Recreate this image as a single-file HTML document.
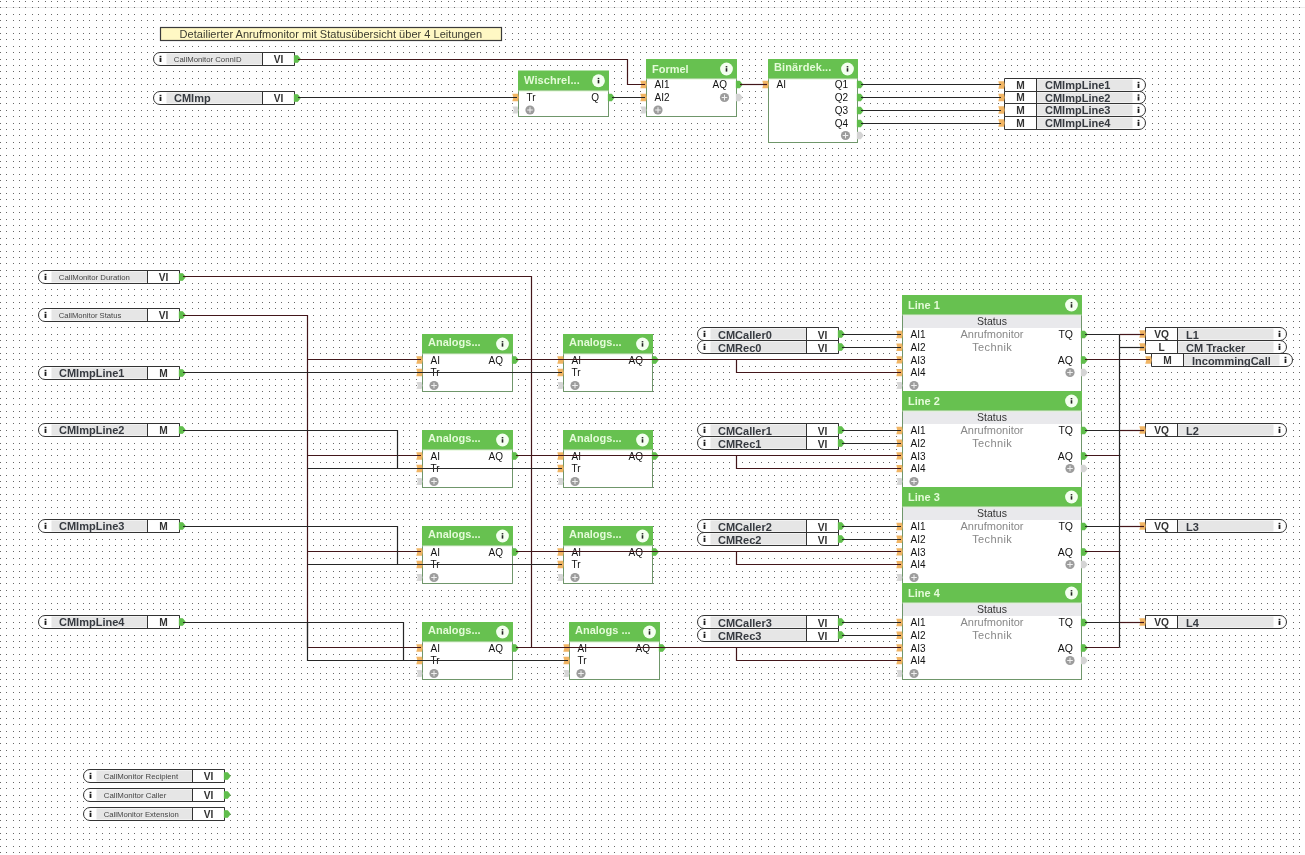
<!DOCTYPE html>
<html><head><meta charset="utf-8"><title>Loxone</title>
<style>
html,body{margin:0;padding:0;background:#fff;overflow:hidden;}
svg{display:block;font-family:"Liberation Sans", sans-serif;will-change:transform;}
</style></head><body>
<svg width="1305" height="855" viewBox="0 0 1305 855">
<defs><pattern id="dots" width="32" height="32" patternUnits="userSpaceOnUse"><g fill="#686868"><rect x="0" y="1" width="1" height="1"/><rect x="0" y="7" width="1" height="1"/><rect x="0" y="14" width="1" height="1"/><rect x="0" y="20" width="1" height="1"/><rect x="0" y="27" width="1" height="1"/><rect x="6" y="1" width="1" height="1"/><rect x="6" y="7" width="1" height="1"/><rect x="6" y="14" width="1" height="1"/><rect x="6" y="20" width="1" height="1"/><rect x="6" y="27" width="1" height="1"/><rect x="13" y="1" width="1" height="1"/><rect x="13" y="7" width="1" height="1"/><rect x="13" y="14" width="1" height="1"/><rect x="13" y="20" width="1" height="1"/><rect x="13" y="27" width="1" height="1"/><rect x="19" y="1" width="1" height="1"/><rect x="19" y="7" width="1" height="1"/><rect x="19" y="14" width="1" height="1"/><rect x="19" y="20" width="1" height="1"/><rect x="19" y="27" width="1" height="1"/><rect x="25" y="1" width="1" height="1"/><rect x="25" y="7" width="1" height="1"/><rect x="25" y="14" width="1" height="1"/><rect x="25" y="20" width="1" height="1"/><rect x="25" y="27" width="1" height="1"/></g></pattern></defs>
<rect x="0" y="0" width="1305" height="855" fill="#fff"/>
<rect x="0" y="7" width="1305" height="1" fill="#ececec"/>
<rect x="0" y="0" width="1305" height="855" fill="url(#dots)"/>
<rect x="160.5" y="27.5" width="341" height="13" fill="#fff8c4" stroke="#3a3a3a" stroke-width="1.2"/>
<text x="179.6" y="37.6" font-size="11" font-weight="normal" fill="#3a3a30" text-anchor="start" textLength="302.5">Detailierter Anrufmonitor mit Statusübersicht über 4 Leitungen</text>
<path d="M160.0,52.5 H294.5 V65.5 H160.0 A6.5,6.5 0 0 1 160.0,52.5 Z" fill="#fff" stroke="#333" stroke-width="1"/>
<rect x="166.5" y="53.5" width="96.0" height="11.0" fill="#e6e6e6"/>
<line x1="262.5" y1="52.5" x2="262.5" y2="65.5" stroke="#333" stroke-width="1"/>
<rect x="159.6" y="55.8" width="1.8" height="1.5" fill="#1e1e1e"/>
<rect x="159.6" y="58.0" width="1.8" height="4" fill="#1e1e1e"/>
<text x="173.8" y="61.9" font-size="8" font-weight="normal" fill="#454545" text-anchor="start" textLength="67.8" lengthAdjust="spacingAndGlyphs">CallMonitor ConnID</text>
<text x="278.5" y="62.7" font-size="10.2" font-weight="bold" fill="#333" text-anchor="middle" >VI</text>
<path d="M294.5,55.8 L297.5,55.8 L299.9,59.0 L297.5,62.2 L294.5,62.2 Z" fill="#60bd4c" stroke="#60bd4c" stroke-width="1.3" stroke-linejoin="round"/>
<path d="M160.0,91.5 H294.5 V104.5 H160.0 A6.5,6.5 0 0 1 160.0,91.5 Z" fill="#fff" stroke="#333" stroke-width="1"/>
<rect x="166.5" y="92.5" width="96.0" height="11.0" fill="#e6e6e6"/>
<line x1="262.5" y1="91.5" x2="262.5" y2="104.5" stroke="#333" stroke-width="1"/>
<rect x="159.6" y="94.8" width="1.8" height="1.5" fill="#1e1e1e"/>
<rect x="159.6" y="97.0" width="1.8" height="4" fill="#1e1e1e"/>
<text x="174.0" y="101.9" font-size="11" font-weight="bold" fill="#363a40" text-anchor="start" >CMImp</text>
<text x="278.5" y="101.60000000000001" font-size="10.2" font-weight="bold" fill="#333" text-anchor="middle" >VI</text>
<path d="M294.5,94.8 L297.5,94.8 L299.9,98.0 L297.5,101.2 L294.5,101.2 Z" fill="#60bd4c" stroke="#60bd4c" stroke-width="1.3" stroke-linejoin="round"/>
<rect x="518.5" y="90.5" width="90.0" height="26.0" fill="#fff" stroke="#6f966a" stroke-width="1"/>
<rect x="518.0" y="70.5" width="91.0" height="20.0" fill="#67c150"/>
<line x1="518.5" y1="91.0" x2="608.5" y2="91.0" stroke="#d9f5cc" stroke-width="1"/>
<text x="524.0" y="83.6" font-size="11" font-weight="bold" fill="#e4fbd8" text-anchor="start" textLength="55.8">Wischrel...</text>
<circle cx="598.5" cy="80.75" r="6.4" fill="#f4fff0"/>
<rect x="597.7" y="77.85" width="1.6" height="1.3" fill="#222"/>
<rect x="597.7" y="79.95" width="1.6" height="3.4" fill="#222"/>
<path d="M512.3,93.8 L518.0,93.8 L518.8,97.5 L518.0,101.2 L512.3,101.2 L513.3,97.5 Z" fill="#f1b564"/>
<text x="526.5" y="101.3" font-size="10" font-weight="normal" fill="#111" text-anchor="start" >Tr</text>
<path d="M608.5,94.3 L611.5,94.3 L613.9,97.5 L611.5,100.7 L608.5,100.7 Z" fill="#60bd4c" stroke="#60bd4c" stroke-width="1.3" stroke-linejoin="round"/>
<text x="599.0" y="101.3" font-size="10" font-weight="normal" fill="#111" text-anchor="end" >Q</text>
<path d="M512.3,106.4 L517.5,106.4 L518.5,110 L517.5,113.6 L512.3,113.6 L513.9,110 Z" fill="#d6d6d6"/>
<circle cx="530.0" cy="110" r="4.6" fill="#9c9c9c"/>
<path d="M527.2,110 h5.6 M530.0,107.2 v5.6" stroke="#f0f0f0" stroke-width="1"/>
<rect x="646.5" y="78.5" width="90.0" height="38.0" fill="#fff" stroke="#6f966a" stroke-width="1"/>
<rect x="646.0" y="59.0" width="91.0" height="19.5" fill="#67c150"/>
<line x1="646.5" y1="79.0" x2="736.5" y2="79.0" stroke="#d9f5cc" stroke-width="1"/>
<text x="652.0" y="73.0" font-size="11" font-weight="bold" fill="#e4fbd8" text-anchor="start" >Formel</text>
<circle cx="726.5" cy="69.0" r="6.4" fill="#f4fff0"/>
<rect x="725.7" y="66.1" width="1.6" height="1.3" fill="#222"/>
<rect x="725.7" y="68.2" width="1.6" height="3.4" fill="#222"/>
<path d="M640.3,80.8 L646.0,80.8 L646.8,84.5 L646.0,88.2 L640.3,88.2 L641.3,84.5 Z" fill="#f1b564"/>
<text x="654.5" y="88.3" font-size="10" font-weight="normal" fill="#111" text-anchor="start" >AI1</text>
<path d="M640.3,93.8 L646.0,93.8 L646.8,97.5 L646.0,101.2 L640.3,101.2 L641.3,97.5 Z" fill="#f1b564"/>
<text x="654.5" y="101.3" font-size="10" font-weight="normal" fill="#111" text-anchor="start" >AI2</text>
<path d="M736.5,81.3 L739.5,81.3 L741.9,84.5 L739.5,87.7 L736.5,87.7 Z" fill="#60bd4c" stroke="#60bd4c" stroke-width="1.3" stroke-linejoin="round"/>
<text x="727.0" y="88.3" font-size="10" font-weight="normal" fill="#111" text-anchor="end" >AQ</text>
<path d="M640.3,106.4 L645.5,106.4 L646.5,110 L645.5,113.6 L640.3,113.6 L641.9,110 Z" fill="#d6d6d6"/>
<circle cx="658.0" cy="110" r="4.6" fill="#9c9c9c"/>
<path d="M655.2,110 h5.6 M658.0,107.2 v5.6" stroke="#f0f0f0" stroke-width="1"/>
<path d="M736.5,94.3 L739.5,94.3 L741.9,97.5 L739.5,100.7 L736.5,100.7 Z" fill="#d4d4d4" stroke="#d4d4d4" stroke-width="1.3" stroke-linejoin="round"/>
<circle cx="724.5" cy="97.5" r="4.6" fill="#9c9c9c"/>
<path d="M721.7,97.5 h5.6 M724.5,94.7 v5.6" stroke="#f0f0f0" stroke-width="1"/>
<rect x="768.5" y="78.5" width="89.0" height="64.0" fill="#fff" stroke="#6f966a" stroke-width="1"/>
<rect x="768.0" y="59.0" width="90.0" height="19.5" fill="#67c150"/>
<line x1="768.5" y1="79.0" x2="857.5" y2="79.0" stroke="#d9f5cc" stroke-width="1"/>
<text x="774.0" y="71.2" font-size="11" font-weight="bold" fill="#e4fbd8" text-anchor="start" textLength="57.3">Binärdek...</text>
<circle cx="847.5" cy="69.0" r="6.4" fill="#f4fff0"/>
<rect x="846.7" y="66.1" width="1.6" height="1.3" fill="#222"/>
<rect x="846.7" y="68.2" width="1.6" height="3.4" fill="#222"/>
<path d="M762.3,80.8 L768.0,80.8 L768.8,84.5 L768.0,88.2 L762.3,88.2 L763.3,84.5 Z" fill="#f1b564"/>
<text x="776.5" y="88.3" font-size="10" font-weight="normal" fill="#111" text-anchor="start" >AI</text>
<path d="M857.5,81.3 L860.5,81.3 L862.9,84.5 L860.5,87.7 L857.5,87.7 Z" fill="#60bd4c" stroke="#60bd4c" stroke-width="1.3" stroke-linejoin="round"/>
<text x="848.0" y="88.3" font-size="10" font-weight="normal" fill="#111" text-anchor="end" >Q1</text>
<path d="M857.5,94.3 L860.5,94.3 L862.9,97.5 L860.5,100.7 L857.5,100.7 Z" fill="#60bd4c" stroke="#60bd4c" stroke-width="1.3" stroke-linejoin="round"/>
<text x="848.0" y="101.3" font-size="10" font-weight="normal" fill="#111" text-anchor="end" >Q2</text>
<path d="M857.5,107.3 L860.5,107.3 L862.9,110.5 L860.5,113.7 L857.5,113.7 Z" fill="#60bd4c" stroke="#60bd4c" stroke-width="1.3" stroke-linejoin="round"/>
<text x="848.0" y="114.3" font-size="10" font-weight="normal" fill="#111" text-anchor="end" >Q3</text>
<path d="M857.5,120.3 L860.5,120.3 L862.9,123.5 L860.5,126.7 L857.5,126.7 Z" fill="#60bd4c" stroke="#60bd4c" stroke-width="1.3" stroke-linejoin="round"/>
<text x="848.0" y="127.3" font-size="10" font-weight="normal" fill="#111" text-anchor="end" >Q4</text>
<path d="M857.5,132.3 L860.5,132.3 L862.9,135.5 L860.5,138.7 L857.5,138.7 Z" fill="#d4d4d4" stroke="#d4d4d4" stroke-width="1.3" stroke-linejoin="round"/>
<circle cx="845.5" cy="135.5" r="4.6" fill="#9c9c9c"/>
<path d="M842.7,135.5 h5.6 M845.5,132.7 v5.6" stroke="#f0f0f0" stroke-width="1"/>
<path d="M1004.5,78.5 H1139.0 A6.5,6.5 0 0 1 1139.0,91.5 H1004.5 Z" fill="#fff" stroke="#333" stroke-width="1"/>
<rect x="1036.5" y="79.5" width="96.0" height="11.0" fill="#e6e6e6"/>
<line x1="1036.5" y1="78.5" x2="1036.5" y2="91.5" stroke="#333" stroke-width="1"/>
<rect x="1137.6" y="81.8" width="1.8" height="1.5" fill="#1e1e1e"/>
<rect x="1137.6" y="84.0" width="1.8" height="4" fill="#1e1e1e"/>
<text x="1020.5" y="88.9" font-size="10.2" font-weight="bold" fill="#333" text-anchor="middle" >M</text>
<text x="1045.0" y="89.2" font-size="11" font-weight="bold" fill="#363a40" text-anchor="start" >CMImpLine1</text>
<path d="M998.3,81.3 L1004.0,81.3 L1004.8,85.0 L1004.0,88.7 L998.3,88.7 L999.3,85.0 Z" fill="#f1b564"/>
<path d="M1004.5,91.5 H1139.5 A6.0,6.0 0 0 1 1139.5,103.5 H1004.5 Z" fill="#fff" stroke="#333" stroke-width="1"/>
<rect x="1036.5" y="92.5" width="96.0" height="10.0" fill="#e6e6e6"/>
<line x1="1036.5" y1="91.5" x2="1036.5" y2="103.5" stroke="#333" stroke-width="1"/>
<rect x="1137.6" y="94.3" width="1.8" height="1.5" fill="#1e1e1e"/>
<rect x="1137.6" y="96.5" width="1.8" height="4" fill="#1e1e1e"/>
<text x="1020.5" y="101.4" font-size="10.2" font-weight="bold" fill="#333" text-anchor="middle" >M</text>
<text x="1045.0" y="101.7" font-size="11" font-weight="bold" fill="#363a40" text-anchor="start" >CMImpLine2</text>
<path d="M998.3,93.8 L1004.0,93.8 L1004.8,97.5 L1004.0,101.2 L998.3,101.2 L999.3,97.5 Z" fill="#f1b564"/>
<path d="M1004.5,103.5 H1139.0 A6.5,6.5 0 0 1 1139.0,116.5 H1004.5 Z" fill="#fff" stroke="#333" stroke-width="1"/>
<rect x="1036.5" y="104.5" width="96.0" height="11.0" fill="#e6e6e6"/>
<line x1="1036.5" y1="103.5" x2="1036.5" y2="116.5" stroke="#333" stroke-width="1"/>
<rect x="1137.6" y="106.8" width="1.8" height="1.5" fill="#1e1e1e"/>
<rect x="1137.6" y="109.0" width="1.8" height="4" fill="#1e1e1e"/>
<text x="1020.5" y="113.9" font-size="10.2" font-weight="bold" fill="#333" text-anchor="middle" >M</text>
<text x="1045.0" y="114.2" font-size="11" font-weight="bold" fill="#363a40" text-anchor="start" >CMImpLine3</text>
<path d="M998.3,106.3 L1004.0,106.3 L1004.8,110.0 L1004.0,113.7 L998.3,113.7 L999.3,110.0 Z" fill="#f1b564"/>
<path d="M1004.5,116.5 H1139.0 A6.5,6.5 0 0 1 1139.0,129.5 H1004.5 Z" fill="#fff" stroke="#333" stroke-width="1"/>
<rect x="1036.5" y="117.5" width="96.0" height="11.0" fill="#e6e6e6"/>
<line x1="1036.5" y1="116.5" x2="1036.5" y2="129.5" stroke="#333" stroke-width="1"/>
<rect x="1137.6" y="119.8" width="1.8" height="1.5" fill="#1e1e1e"/>
<rect x="1137.6" y="122.0" width="1.8" height="4" fill="#1e1e1e"/>
<text x="1020.5" y="126.9" font-size="10.2" font-weight="bold" fill="#333" text-anchor="middle" >M</text>
<text x="1045.0" y="127.2" font-size="11" font-weight="bold" fill="#363a40" text-anchor="start" >CMImpLine4</text>
<path d="M998.3,119.3 L1004.0,119.3 L1004.8,123.0 L1004.0,126.7 L998.3,126.7 L999.3,123.0 Z" fill="#f1b564"/>
<path d="M45.0,270.5 H179.5 V283.5 H45.0 A6.5,6.5 0 0 1 45.0,270.5 Z" fill="#fff" stroke="#333" stroke-width="1"/>
<rect x="51.5" y="271.5" width="96.0" height="11.0" fill="#e6e6e6"/>
<line x1="147.5" y1="270.5" x2="147.5" y2="283.5" stroke="#333" stroke-width="1"/>
<rect x="44.6" y="273.8" width="1.8" height="1.5" fill="#1e1e1e"/>
<rect x="44.6" y="276.0" width="1.8" height="4" fill="#1e1e1e"/>
<text x="58.8" y="279.9" font-size="8" font-weight="normal" fill="#454545" text-anchor="start" textLength="71" lengthAdjust="spacingAndGlyphs">CallMonitor Duration</text>
<text x="163.5" y="280.8" font-size="10.2" font-weight="bold" fill="#333" text-anchor="middle" >VI</text>
<path d="M179.5,273.8 L182.5,273.8 L184.9,277.0 L182.5,280.2 L179.5,280.2 Z" fill="#60bd4c" stroke="#60bd4c" stroke-width="1.3" stroke-linejoin="round"/>
<path d="M45.0,308.5 H179.5 V321.5 H45.0 A6.5,6.5 0 0 1 45.0,308.5 Z" fill="#fff" stroke="#333" stroke-width="1"/>
<rect x="51.5" y="309.5" width="96.0" height="11.0" fill="#e6e6e6"/>
<line x1="147.5" y1="308.5" x2="147.5" y2="321.5" stroke="#333" stroke-width="1"/>
<rect x="44.6" y="311.8" width="1.8" height="1.5" fill="#1e1e1e"/>
<rect x="44.6" y="314.0" width="1.8" height="4" fill="#1e1e1e"/>
<text x="58.8" y="317.9" font-size="8" font-weight="normal" fill="#454545" text-anchor="start" textLength="62.5" lengthAdjust="spacingAndGlyphs">CallMonitor Status</text>
<text x="163.5" y="318.8" font-size="10.2" font-weight="bold" fill="#333" text-anchor="middle" >VI</text>
<path d="M179.5,311.8 L182.5,311.8 L184.9,315.0 L182.5,318.2 L179.5,318.2 Z" fill="#60bd4c" stroke="#60bd4c" stroke-width="1.3" stroke-linejoin="round"/>
<path d="M45.0,366.5 H179.5 V379.5 H45.0 A6.5,6.5 0 0 1 45.0,366.5 Z" fill="#fff" stroke="#333" stroke-width="1"/>
<rect x="51.5" y="367.5" width="96.0" height="11.0" fill="#e6e6e6"/>
<line x1="147.5" y1="366.5" x2="147.5" y2="379.5" stroke="#333" stroke-width="1"/>
<rect x="44.6" y="369.8" width="1.8" height="1.5" fill="#1e1e1e"/>
<rect x="44.6" y="372.0" width="1.8" height="4" fill="#1e1e1e"/>
<text x="59.0" y="377.1" font-size="11" font-weight="bold" fill="#363a40" text-anchor="start" >CMImpLine1</text>
<text x="163.5" y="376.8" font-size="10.2" font-weight="bold" fill="#333" text-anchor="middle" >M</text>
<path d="M179.5,369.8 L182.5,369.8 L184.9,373.0 L182.5,376.2 L179.5,376.2 Z" fill="#60bd4c" stroke="#60bd4c" stroke-width="1.3" stroke-linejoin="round"/>
<path d="M45.0,423.5 H179.5 V436.5 H45.0 A6.5,6.5 0 0 1 45.0,423.5 Z" fill="#fff" stroke="#333" stroke-width="1"/>
<rect x="51.5" y="424.5" width="96.0" height="11.0" fill="#e6e6e6"/>
<line x1="147.5" y1="423.5" x2="147.5" y2="436.5" stroke="#333" stroke-width="1"/>
<rect x="44.6" y="426.8" width="1.8" height="1.5" fill="#1e1e1e"/>
<rect x="44.6" y="429.0" width="1.8" height="4" fill="#1e1e1e"/>
<text x="59.0" y="434.1" font-size="11" font-weight="bold" fill="#363a40" text-anchor="start" >CMImpLine2</text>
<text x="163.5" y="433.8" font-size="10.2" font-weight="bold" fill="#333" text-anchor="middle" >M</text>
<path d="M179.5,426.8 L182.5,426.8 L184.9,430.0 L182.5,433.2 L179.5,433.2 Z" fill="#60bd4c" stroke="#60bd4c" stroke-width="1.3" stroke-linejoin="round"/>
<path d="M45.0,519.5 H179.5 V532.5 H45.0 A6.5,6.5 0 0 1 45.0,519.5 Z" fill="#fff" stroke="#333" stroke-width="1"/>
<rect x="51.5" y="520.5" width="96.0" height="11.0" fill="#e6e6e6"/>
<line x1="147.5" y1="519.5" x2="147.5" y2="532.5" stroke="#333" stroke-width="1"/>
<rect x="44.6" y="522.8" width="1.8" height="1.5" fill="#1e1e1e"/>
<rect x="44.6" y="525.0" width="1.8" height="4" fill="#1e1e1e"/>
<text x="59.0" y="530.1" font-size="11" font-weight="bold" fill="#363a40" text-anchor="start" >CMImpLine3</text>
<text x="163.5" y="529.8000000000001" font-size="10.2" font-weight="bold" fill="#333" text-anchor="middle" >M</text>
<path d="M179.5,522.8 L182.5,522.8 L184.9,526.0 L182.5,529.2 L179.5,529.2 Z" fill="#60bd4c" stroke="#60bd4c" stroke-width="1.3" stroke-linejoin="round"/>
<path d="M45.0,615.5 H179.5 V628.5 H45.0 A6.5,6.5 0 0 1 45.0,615.5 Z" fill="#fff" stroke="#333" stroke-width="1"/>
<rect x="51.5" y="616.5" width="96.0" height="11.0" fill="#e6e6e6"/>
<line x1="147.5" y1="615.5" x2="147.5" y2="628.5" stroke="#333" stroke-width="1"/>
<rect x="44.6" y="618.8" width="1.8" height="1.5" fill="#1e1e1e"/>
<rect x="44.6" y="621.0" width="1.8" height="4" fill="#1e1e1e"/>
<text x="59.0" y="626.1" font-size="11" font-weight="bold" fill="#363a40" text-anchor="start" >CMImpLine4</text>
<text x="163.5" y="625.8000000000001" font-size="10.2" font-weight="bold" fill="#333" text-anchor="middle" >M</text>
<path d="M179.5,618.8 L182.5,618.8 L184.9,622.0 L182.5,625.2 L179.5,625.2 Z" fill="#60bd4c" stroke="#60bd4c" stroke-width="1.3" stroke-linejoin="round"/>
<rect x="422.5" y="353.5" width="90.0" height="38.0" fill="#fff" stroke="#6f966a" stroke-width="1"/>
<rect x="422.0" y="334.0" width="91.0" height="19.5" fill="#67c150"/>
<line x1="422.5" y1="354.0" x2="512.5" y2="354.0" stroke="#d9f5cc" stroke-width="1"/>
<text x="428.0" y="346.2" font-size="11" font-weight="bold" fill="#e4fbd8" text-anchor="start" >Analogs...</text>
<circle cx="502.5" cy="344.0" r="6.4" fill="#f4fff0"/>
<rect x="501.7" y="341.1" width="1.6" height="1.3" fill="#222"/>
<rect x="501.7" y="343.2" width="1.6" height="3.4" fill="#222"/>
<path d="M416.3,356.3 L422.0,356.3 L422.8,360.0 L422.0,363.7 L416.3,363.7 L417.3,360.0 Z" fill="#f1b564"/>
<text x="430.5" y="363.8" font-size="10" font-weight="normal" fill="#111" text-anchor="start" >AI</text>
<path d="M416.3,368.8 L422.0,368.8 L422.8,372.5 L422.0,376.2 L416.3,376.2 L417.3,372.5 Z" fill="#f1b564"/>
<text x="430.5" y="376.3" font-size="10" font-weight="normal" fill="#111" text-anchor="start" >Tr</text>
<path d="M512.5,356.8 L515.5,356.8 L517.9,360.0 L515.5,363.2 L512.5,363.2 Z" fill="#60bd4c" stroke="#60bd4c" stroke-width="1.3" stroke-linejoin="round"/>
<text x="503.0" y="363.8" font-size="10" font-weight="normal" fill="#111" text-anchor="end" >AQ</text>
<path d="M416.3,381.9 L421.5,381.9 L422.5,385.5 L421.5,389.1 L416.3,389.1 L417.9,385.5 Z" fill="#d6d6d6"/>
<circle cx="434.0" cy="385.5" r="4.6" fill="#9c9c9c"/>
<path d="M431.2,385.5 h5.6 M434.0,382.7 v5.6" stroke="#f0f0f0" stroke-width="1"/>
<rect x="563.5" y="353.5" width="89.0" height="38.0" fill="#fff" stroke="#6f966a" stroke-width="1"/>
<rect x="563.0" y="334.0" width="90.0" height="19.5" fill="#67c150"/>
<line x1="563.5" y1="354.0" x2="652.5" y2="354.0" stroke="#d9f5cc" stroke-width="1"/>
<text x="569.0" y="346.2" font-size="11" font-weight="bold" fill="#e4fbd8" text-anchor="start" >Analogs...</text>
<circle cx="642.5" cy="344.0" r="6.4" fill="#f4fff0"/>
<rect x="641.7" y="341.1" width="1.6" height="1.3" fill="#222"/>
<rect x="641.7" y="343.2" width="1.6" height="3.4" fill="#222"/>
<path d="M557.3,356.3 L563.0,356.3 L563.8,360.0 L563.0,363.7 L557.3,363.7 L558.3,360.0 Z" fill="#f1b564"/>
<text x="571.5" y="363.8" font-size="10" font-weight="normal" fill="#111" text-anchor="start" >AI</text>
<path d="M557.3,368.8 L563.0,368.8 L563.8,372.5 L563.0,376.2 L557.3,376.2 L558.3,372.5 Z" fill="#f1b564"/>
<text x="571.5" y="376.3" font-size="10" font-weight="normal" fill="#111" text-anchor="start" >Tr</text>
<path d="M652.5,356.8 L655.5,356.8 L657.9,360.0 L655.5,363.2 L652.5,363.2 Z" fill="#60bd4c" stroke="#60bd4c" stroke-width="1.3" stroke-linejoin="round"/>
<text x="643.0" y="363.8" font-size="10" font-weight="normal" fill="#111" text-anchor="end" >AQ</text>
<path d="M557.3,381.9 L562.5,381.9 L563.5,385.5 L562.5,389.1 L557.3,389.1 L558.9,385.5 Z" fill="#d6d6d6"/>
<circle cx="575.0" cy="385.5" r="4.6" fill="#9c9c9c"/>
<path d="M572.2,385.5 h5.6 M575.0,382.7 v5.6" stroke="#f0f0f0" stroke-width="1"/>
<rect x="422.5" y="449.5" width="90.0" height="38.0" fill="#fff" stroke="#6f966a" stroke-width="1"/>
<rect x="422.0" y="430.0" width="91.0" height="19.5" fill="#67c150"/>
<line x1="422.5" y1="450.0" x2="512.5" y2="450.0" stroke="#d9f5cc" stroke-width="1"/>
<text x="428.0" y="442.2" font-size="11" font-weight="bold" fill="#e4fbd8" text-anchor="start" >Analogs...</text>
<circle cx="502.5" cy="440.0" r="6.4" fill="#f4fff0"/>
<rect x="501.7" y="437.1" width="1.6" height="1.3" fill="#222"/>
<rect x="501.7" y="439.2" width="1.6" height="3.4" fill="#222"/>
<path d="M416.3,452.3 L422.0,452.3 L422.8,456.0 L422.0,459.7 L416.3,459.7 L417.3,456.0 Z" fill="#f1b564"/>
<text x="430.5" y="459.8" font-size="10" font-weight="normal" fill="#111" text-anchor="start" >AI</text>
<path d="M416.3,464.8 L422.0,464.8 L422.8,468.5 L422.0,472.2 L416.3,472.2 L417.3,468.5 Z" fill="#f1b564"/>
<text x="430.5" y="472.3" font-size="10" font-weight="normal" fill="#111" text-anchor="start" >Tr</text>
<path d="M512.5,452.8 L515.5,452.8 L517.9,456.0 L515.5,459.2 L512.5,459.2 Z" fill="#60bd4c" stroke="#60bd4c" stroke-width="1.3" stroke-linejoin="round"/>
<text x="503.0" y="459.8" font-size="10" font-weight="normal" fill="#111" text-anchor="end" >AQ</text>
<path d="M416.3,477.9 L421.5,477.9 L422.5,481.5 L421.5,485.1 L416.3,485.1 L417.9,481.5 Z" fill="#d6d6d6"/>
<circle cx="434.0" cy="481.5" r="4.6" fill="#9c9c9c"/>
<path d="M431.2,481.5 h5.6 M434.0,478.7 v5.6" stroke="#f0f0f0" stroke-width="1"/>
<rect x="563.5" y="449.5" width="89.0" height="38.0" fill="#fff" stroke="#6f966a" stroke-width="1"/>
<rect x="563.0" y="430.0" width="90.0" height="19.5" fill="#67c150"/>
<line x1="563.5" y1="450.0" x2="652.5" y2="450.0" stroke="#d9f5cc" stroke-width="1"/>
<text x="569.0" y="442.2" font-size="11" font-weight="bold" fill="#e4fbd8" text-anchor="start" >Analogs...</text>
<circle cx="642.5" cy="440.0" r="6.4" fill="#f4fff0"/>
<rect x="641.7" y="437.1" width="1.6" height="1.3" fill="#222"/>
<rect x="641.7" y="439.2" width="1.6" height="3.4" fill="#222"/>
<path d="M557.3,452.3 L563.0,452.3 L563.8,456.0 L563.0,459.7 L557.3,459.7 L558.3,456.0 Z" fill="#f1b564"/>
<text x="571.5" y="459.8" font-size="10" font-weight="normal" fill="#111" text-anchor="start" >AI</text>
<path d="M557.3,464.8 L563.0,464.8 L563.8,468.5 L563.0,472.2 L557.3,472.2 L558.3,468.5 Z" fill="#f1b564"/>
<text x="571.5" y="472.3" font-size="10" font-weight="normal" fill="#111" text-anchor="start" >Tr</text>
<path d="M652.5,452.8 L655.5,452.8 L657.9,456.0 L655.5,459.2 L652.5,459.2 Z" fill="#60bd4c" stroke="#60bd4c" stroke-width="1.3" stroke-linejoin="round"/>
<text x="643.0" y="459.8" font-size="10" font-weight="normal" fill="#111" text-anchor="end" >AQ</text>
<path d="M557.3,477.9 L562.5,477.9 L563.5,481.5 L562.5,485.1 L557.3,485.1 L558.9,481.5 Z" fill="#d6d6d6"/>
<circle cx="575.0" cy="481.5" r="4.6" fill="#9c9c9c"/>
<path d="M572.2,481.5 h5.6 M575.0,478.7 v5.6" stroke="#f0f0f0" stroke-width="1"/>
<rect x="422.5" y="545.5" width="90.0" height="38.0" fill="#fff" stroke="#6f966a" stroke-width="1"/>
<rect x="422.0" y="526.0" width="91.0" height="19.5" fill="#67c150"/>
<line x1="422.5" y1="546.0" x2="512.5" y2="546.0" stroke="#d9f5cc" stroke-width="1"/>
<text x="428.0" y="538.2" font-size="11" font-weight="bold" fill="#e4fbd8" text-anchor="start" >Analogs...</text>
<circle cx="502.5" cy="536.0" r="6.4" fill="#f4fff0"/>
<rect x="501.7" y="533.1" width="1.6" height="1.3" fill="#222"/>
<rect x="501.7" y="535.2" width="1.6" height="3.4" fill="#222"/>
<path d="M416.3,548.3 L422.0,548.3 L422.8,552.0 L422.0,555.7 L416.3,555.7 L417.3,552.0 Z" fill="#f1b564"/>
<text x="430.5" y="555.8" font-size="10" font-weight="normal" fill="#111" text-anchor="start" >AI</text>
<path d="M416.3,560.8 L422.0,560.8 L422.8,564.5 L422.0,568.2 L416.3,568.2 L417.3,564.5 Z" fill="#f1b564"/>
<text x="430.5" y="568.3" font-size="10" font-weight="normal" fill="#111" text-anchor="start" >Tr</text>
<path d="M512.5,548.8 L515.5,548.8 L517.9,552.0 L515.5,555.2 L512.5,555.2 Z" fill="#60bd4c" stroke="#60bd4c" stroke-width="1.3" stroke-linejoin="round"/>
<text x="503.0" y="555.8" font-size="10" font-weight="normal" fill="#111" text-anchor="end" >AQ</text>
<path d="M416.3,573.9 L421.5,573.9 L422.5,577.5 L421.5,581.1 L416.3,581.1 L417.9,577.5 Z" fill="#d6d6d6"/>
<circle cx="434.0" cy="577.5" r="4.6" fill="#9c9c9c"/>
<path d="M431.2,577.5 h5.6 M434.0,574.7 v5.6" stroke="#f0f0f0" stroke-width="1"/>
<rect x="563.5" y="545.5" width="89.0" height="38.0" fill="#fff" stroke="#6f966a" stroke-width="1"/>
<rect x="563.0" y="526.0" width="90.0" height="19.5" fill="#67c150"/>
<line x1="563.5" y1="546.0" x2="652.5" y2="546.0" stroke="#d9f5cc" stroke-width="1"/>
<text x="569.0" y="538.2" font-size="11" font-weight="bold" fill="#e4fbd8" text-anchor="start" >Analogs...</text>
<circle cx="642.5" cy="536.0" r="6.4" fill="#f4fff0"/>
<rect x="641.7" y="533.1" width="1.6" height="1.3" fill="#222"/>
<rect x="641.7" y="535.2" width="1.6" height="3.4" fill="#222"/>
<path d="M557.3,548.3 L563.0,548.3 L563.8,552.0 L563.0,555.7 L557.3,555.7 L558.3,552.0 Z" fill="#f1b564"/>
<text x="571.5" y="555.8" font-size="10" font-weight="normal" fill="#111" text-anchor="start" >AI</text>
<path d="M557.3,560.8 L563.0,560.8 L563.8,564.5 L563.0,568.2 L557.3,568.2 L558.3,564.5 Z" fill="#f1b564"/>
<text x="571.5" y="568.3" font-size="10" font-weight="normal" fill="#111" text-anchor="start" >Tr</text>
<path d="M652.5,548.8 L655.5,548.8 L657.9,552.0 L655.5,555.2 L652.5,555.2 Z" fill="#60bd4c" stroke="#60bd4c" stroke-width="1.3" stroke-linejoin="round"/>
<text x="643.0" y="555.8" font-size="10" font-weight="normal" fill="#111" text-anchor="end" >AQ</text>
<path d="M557.3,573.9 L562.5,573.9 L563.5,577.5 L562.5,581.1 L557.3,581.1 L558.9,577.5 Z" fill="#d6d6d6"/>
<circle cx="575.0" cy="577.5" r="4.6" fill="#9c9c9c"/>
<path d="M572.2,577.5 h5.6 M575.0,574.7 v5.6" stroke="#f0f0f0" stroke-width="1"/>
<rect x="422.5" y="641.5" width="90.0" height="38.0" fill="#fff" stroke="#6f966a" stroke-width="1"/>
<rect x="422.0" y="622.0" width="91.0" height="19.5" fill="#67c150"/>
<line x1="422.5" y1="642.0" x2="512.5" y2="642.0" stroke="#d9f5cc" stroke-width="1"/>
<text x="428.0" y="634.2" font-size="11" font-weight="bold" fill="#e4fbd8" text-anchor="start" >Analogs...</text>
<circle cx="502.5" cy="632.0" r="6.4" fill="#f4fff0"/>
<rect x="501.7" y="629.1" width="1.6" height="1.3" fill="#222"/>
<rect x="501.7" y="631.2" width="1.6" height="3.4" fill="#222"/>
<path d="M416.3,644.3 L422.0,644.3 L422.8,648.0 L422.0,651.7 L416.3,651.7 L417.3,648.0 Z" fill="#f1b564"/>
<text x="430.5" y="651.8" font-size="10" font-weight="normal" fill="#111" text-anchor="start" >AI</text>
<path d="M416.3,656.8 L422.0,656.8 L422.8,660.5 L422.0,664.2 L416.3,664.2 L417.3,660.5 Z" fill="#f1b564"/>
<text x="430.5" y="664.3" font-size="10" font-weight="normal" fill="#111" text-anchor="start" >Tr</text>
<path d="M512.5,644.8 L515.5,644.8 L517.9,648.0 L515.5,651.2 L512.5,651.2 Z" fill="#60bd4c" stroke="#60bd4c" stroke-width="1.3" stroke-linejoin="round"/>
<text x="503.0" y="651.8" font-size="10" font-weight="normal" fill="#111" text-anchor="end" >AQ</text>
<path d="M416.3,669.9 L421.5,669.9 L422.5,673.5 L421.5,677.1 L416.3,677.1 L417.9,673.5 Z" fill="#d6d6d6"/>
<circle cx="434.0" cy="673.5" r="4.6" fill="#9c9c9c"/>
<path d="M431.2,673.5 h5.6 M434.0,670.7 v5.6" stroke="#f0f0f0" stroke-width="1"/>
<rect x="569.5" y="641.5" width="90.0" height="38.0" fill="#fff" stroke="#6f966a" stroke-width="1"/>
<rect x="569.0" y="622.0" width="91.0" height="19.5" fill="#67c150"/>
<line x1="569.5" y1="642.0" x2="659.5" y2="642.0" stroke="#d9f5cc" stroke-width="1"/>
<text x="575.0" y="634.2" font-size="11" font-weight="bold" fill="#e4fbd8" text-anchor="start" >Analogs ...</text>
<circle cx="649.5" cy="632.0" r="6.4" fill="#f4fff0"/>
<rect x="648.7" y="629.1" width="1.6" height="1.3" fill="#222"/>
<rect x="648.7" y="631.2" width="1.6" height="3.4" fill="#222"/>
<path d="M563.3,644.3 L569.0,644.3 L569.8,648.0 L569.0,651.7 L563.3,651.7 L564.3,648.0 Z" fill="#f1b564"/>
<text x="577.5" y="651.8" font-size="10" font-weight="normal" fill="#111" text-anchor="start" >AI</text>
<path d="M563.3,656.8 L569.0,656.8 L569.8,660.5 L569.0,664.2 L563.3,664.2 L564.3,660.5 Z" fill="#f1b564"/>
<text x="577.5" y="664.3" font-size="10" font-weight="normal" fill="#111" text-anchor="start" >Tr</text>
<path d="M659.5,644.8 L662.5,644.8 L664.9,648.0 L662.5,651.2 L659.5,651.2 Z" fill="#60bd4c" stroke="#60bd4c" stroke-width="1.3" stroke-linejoin="round"/>
<text x="650.0" y="651.8" font-size="10" font-weight="normal" fill="#111" text-anchor="end" >AQ</text>
<path d="M563.3,669.9 L568.5,669.9 L569.5,673.5 L568.5,677.1 L563.3,677.1 L564.9,673.5 Z" fill="#d6d6d6"/>
<circle cx="581.0" cy="673.5" r="4.6" fill="#9c9c9c"/>
<path d="M578.2,673.5 h5.6 M581.0,670.7 v5.6" stroke="#f0f0f0" stroke-width="1"/>
<path d="M704.0,327.5 H838.5 V340.5 H704.0 A6.5,6.5 0 0 1 704.0,327.5 Z" fill="#fff" stroke="#333" stroke-width="1"/>
<rect x="710.5" y="328.5" width="96.0" height="11.0" fill="#e6e6e6"/>
<line x1="806.5" y1="327.5" x2="806.5" y2="340.5" stroke="#333" stroke-width="1"/>
<rect x="703.6" y="330.8" width="1.8" height="1.5" fill="#1e1e1e"/>
<rect x="703.6" y="333.0" width="1.8" height="4" fill="#1e1e1e"/>
<text x="718.0" y="338.8" font-size="11" font-weight="bold" fill="#363a40" text-anchor="start" >CMCaller0</text>
<text x="822.5" y="338.5" font-size="10.2" font-weight="bold" fill="#333" text-anchor="middle" >VI</text>
<path d="M838.5,330.8 L841.5,330.8 L843.9,334.0 L841.5,337.2 L838.5,337.2 Z" fill="#60bd4c" stroke="#60bd4c" stroke-width="1.3" stroke-linejoin="round"/>
<path d="M704.0,340.5 H838.5 V353.5 H704.0 A6.5,6.5 0 0 1 704.0,340.5 Z" fill="#fff" stroke="#333" stroke-width="1"/>
<rect x="710.5" y="341.5" width="96.0" height="11.0" fill="#e6e6e6"/>
<line x1="806.5" y1="340.5" x2="806.5" y2="353.5" stroke="#333" stroke-width="1"/>
<rect x="703.6" y="343.8" width="1.8" height="1.5" fill="#1e1e1e"/>
<rect x="703.6" y="346.0" width="1.8" height="4" fill="#1e1e1e"/>
<text x="718.0" y="351.8" font-size="11" font-weight="bold" fill="#363a40" text-anchor="start" >CMRec0</text>
<text x="822.5" y="351.5" font-size="10.2" font-weight="bold" fill="#333" text-anchor="middle" >VI</text>
<path d="M838.5,343.8 L841.5,343.8 L843.9,347.0 L841.5,350.2 L838.5,350.2 Z" fill="#60bd4c" stroke="#60bd4c" stroke-width="1.3" stroke-linejoin="round"/>
<path d="M704.0,423.5 H838.5 V436.5 H704.0 A6.5,6.5 0 0 1 704.0,423.5 Z" fill="#fff" stroke="#333" stroke-width="1"/>
<rect x="710.5" y="424.5" width="96.0" height="11.0" fill="#e6e6e6"/>
<line x1="806.5" y1="423.5" x2="806.5" y2="436.5" stroke="#333" stroke-width="1"/>
<rect x="703.6" y="426.8" width="1.8" height="1.5" fill="#1e1e1e"/>
<rect x="703.6" y="429.0" width="1.8" height="4" fill="#1e1e1e"/>
<text x="718.0" y="434.8" font-size="11" font-weight="bold" fill="#363a40" text-anchor="start" >CMCaller1</text>
<text x="822.5" y="434.5" font-size="10.2" font-weight="bold" fill="#333" text-anchor="middle" >VI</text>
<path d="M838.5,426.8 L841.5,426.8 L843.9,430.0 L841.5,433.2 L838.5,433.2 Z" fill="#60bd4c" stroke="#60bd4c" stroke-width="1.3" stroke-linejoin="round"/>
<path d="M704.0,436.5 H838.5 V449.5 H704.0 A6.5,6.5 0 0 1 704.0,436.5 Z" fill="#fff" stroke="#333" stroke-width="1"/>
<rect x="710.5" y="437.5" width="96.0" height="11.0" fill="#e6e6e6"/>
<line x1="806.5" y1="436.5" x2="806.5" y2="449.5" stroke="#333" stroke-width="1"/>
<rect x="703.6" y="439.8" width="1.8" height="1.5" fill="#1e1e1e"/>
<rect x="703.6" y="442.0" width="1.8" height="4" fill="#1e1e1e"/>
<text x="718.0" y="447.8" font-size="11" font-weight="bold" fill="#363a40" text-anchor="start" >CMRec1</text>
<text x="822.5" y="447.5" font-size="10.2" font-weight="bold" fill="#333" text-anchor="middle" >VI</text>
<path d="M838.5,439.8 L841.5,439.8 L843.9,443.0 L841.5,446.2 L838.5,446.2 Z" fill="#60bd4c" stroke="#60bd4c" stroke-width="1.3" stroke-linejoin="round"/>
<path d="M704.0,519.5 H838.5 V532.5 H704.0 A6.5,6.5 0 0 1 704.0,519.5 Z" fill="#fff" stroke="#333" stroke-width="1"/>
<rect x="710.5" y="520.5" width="96.0" height="11.0" fill="#e6e6e6"/>
<line x1="806.5" y1="519.5" x2="806.5" y2="532.5" stroke="#333" stroke-width="1"/>
<rect x="703.6" y="522.8" width="1.8" height="1.5" fill="#1e1e1e"/>
<rect x="703.6" y="525.0" width="1.8" height="4" fill="#1e1e1e"/>
<text x="718.0" y="530.8" font-size="11" font-weight="bold" fill="#363a40" text-anchor="start" >CMCaller2</text>
<text x="822.5" y="530.5" font-size="10.2" font-weight="bold" fill="#333" text-anchor="middle" >VI</text>
<path d="M838.5,522.8 L841.5,522.8 L843.9,526.0 L841.5,529.2 L838.5,529.2 Z" fill="#60bd4c" stroke="#60bd4c" stroke-width="1.3" stroke-linejoin="round"/>
<path d="M704.0,532.5 H838.5 V545.5 H704.0 A6.5,6.5 0 0 1 704.0,532.5 Z" fill="#fff" stroke="#333" stroke-width="1"/>
<rect x="710.5" y="533.5" width="96.0" height="11.0" fill="#e6e6e6"/>
<line x1="806.5" y1="532.5" x2="806.5" y2="545.5" stroke="#333" stroke-width="1"/>
<rect x="703.6" y="535.8" width="1.8" height="1.5" fill="#1e1e1e"/>
<rect x="703.6" y="538.0" width="1.8" height="4" fill="#1e1e1e"/>
<text x="718.0" y="543.8" font-size="11" font-weight="bold" fill="#363a40" text-anchor="start" >CMRec2</text>
<text x="822.5" y="543.5" font-size="10.2" font-weight="bold" fill="#333" text-anchor="middle" >VI</text>
<path d="M838.5,535.8 L841.5,535.8 L843.9,539.0 L841.5,542.2 L838.5,542.2 Z" fill="#60bd4c" stroke="#60bd4c" stroke-width="1.3" stroke-linejoin="round"/>
<path d="M704.0,615.5 H838.5 V628.5 H704.0 A6.5,6.5 0 0 1 704.0,615.5 Z" fill="#fff" stroke="#333" stroke-width="1"/>
<rect x="710.5" y="616.5" width="96.0" height="11.0" fill="#e6e6e6"/>
<line x1="806.5" y1="615.5" x2="806.5" y2="628.5" stroke="#333" stroke-width="1"/>
<rect x="703.6" y="618.8" width="1.8" height="1.5" fill="#1e1e1e"/>
<rect x="703.6" y="621.0" width="1.8" height="4" fill="#1e1e1e"/>
<text x="718.0" y="626.8" font-size="11" font-weight="bold" fill="#363a40" text-anchor="start" >CMCaller3</text>
<text x="822.5" y="626.5" font-size="10.2" font-weight="bold" fill="#333" text-anchor="middle" >VI</text>
<path d="M838.5,618.8 L841.5,618.8 L843.9,622.0 L841.5,625.2 L838.5,625.2 Z" fill="#60bd4c" stroke="#60bd4c" stroke-width="1.3" stroke-linejoin="round"/>
<path d="M704.0,628.5 H838.5 V641.5 H704.0 A6.5,6.5 0 0 1 704.0,628.5 Z" fill="#fff" stroke="#333" stroke-width="1"/>
<rect x="710.5" y="629.5" width="96.0" height="11.0" fill="#e6e6e6"/>
<line x1="806.5" y1="628.5" x2="806.5" y2="641.5" stroke="#333" stroke-width="1"/>
<rect x="703.6" y="631.8" width="1.8" height="1.5" fill="#1e1e1e"/>
<rect x="703.6" y="634.0" width="1.8" height="4" fill="#1e1e1e"/>
<text x="718.0" y="639.8" font-size="11" font-weight="bold" fill="#363a40" text-anchor="start" >CMRec3</text>
<text x="822.5" y="639.5" font-size="10.2" font-weight="bold" fill="#333" text-anchor="middle" >VI</text>
<path d="M838.5,631.8 L841.5,631.8 L843.9,635.0 L841.5,638.2 L838.5,638.2 Z" fill="#60bd4c" stroke="#60bd4c" stroke-width="1.3" stroke-linejoin="round"/>
<rect x="902.5" y="314.5" width="179.0" height="77" fill="#fff" stroke="#6f966a" stroke-width="1"/>
<rect x="902.0" y="295.0" width="180.0" height="19.5" fill="#67c150"/>
<rect x="903.0" y="315.0" width="178.0" height="13" fill="#e9e9ec"/>
<line x1="902.5" y1="315.0" x2="1081.5" y2="315.0" stroke="#d9f5cc" stroke-width="1"/>
<text x="908.0" y="309.1" font-size="11" font-weight="bold" fill="#e4fbd8" text-anchor="start" >Line 1</text>
<circle cx="1071.5" cy="305.0" r="6.4" fill="#f4fff0"/>
<rect x="1070.7" y="302.1" width="1.6" height="1.3" fill="#222"/>
<rect x="1070.7" y="304.2" width="1.6" height="3.4" fill="#222"/>
<text x="992.0" y="324.9" font-size="10.5" font-weight="normal" fill="#333" text-anchor="middle" >Status</text>
<text x="992.0" y="338.1" font-size="11" font-weight="normal" fill="#888" text-anchor="middle" >Anrufmonitor</text>
<text x="992.0" y="350.8" font-size="11" font-weight="normal" fill="#888" text-anchor="middle" textLength="39.5">Technik</text>
<path d="M896.3,330.8 L902.0,330.8 L902.8,334.5 L902.0,338.2 L896.3,338.2 L897.3,334.5 Z" fill="#f1b564"/>
<text x="910.5" y="338.1" font-size="10" font-weight="normal" fill="#111" text-anchor="start" >AI1</text>
<path d="M896.3,343.5 L902.0,343.5 L902.8,347.2 L902.0,350.9 L896.3,350.9 L897.3,347.2 Z" fill="#f1b564"/>
<text x="910.5" y="350.8" font-size="10" font-weight="normal" fill="#111" text-anchor="start" >AI2</text>
<path d="M896.3,356.2 L902.0,356.2 L902.8,359.9 L902.0,363.59999999999997 L896.3,363.59999999999997 L897.3,359.9 Z" fill="#f1b564"/>
<text x="910.5" y="363.5" font-size="10" font-weight="normal" fill="#111" text-anchor="start" >AI3</text>
<path d="M896.3,368.90000000000003 L902.0,368.90000000000003 L902.8,372.6 L902.0,376.3 L896.3,376.3 L897.3,372.6 Z" fill="#f1b564"/>
<text x="910.5" y="376.20000000000005" font-size="10" font-weight="normal" fill="#111" text-anchor="start" >AI4</text>
<path d="M896.3,381.9 L901.5,381.9 L902.5,385.5 L901.5,389.1 L896.3,389.1 L897.9,385.5 Z" fill="#d6d6d6"/>
<circle cx="914.0" cy="385.5" r="4.6" fill="#9c9c9c"/>
<path d="M911.2,385.5 h5.6 M914.0,382.7 v5.6" stroke="#f0f0f0" stroke-width="1"/>
<path d="M1081.5,331.3 L1084.5,331.3 L1086.9,334.5 L1084.5,337.7 L1081.5,337.7 Z" fill="#60bd4c" stroke="#60bd4c" stroke-width="1.3" stroke-linejoin="round"/>
<text x="1073.0" y="338.1" font-size="10.5" font-weight="normal" fill="#111" text-anchor="end" >TQ</text>
<path d="M1081.5,356.8 L1084.5,356.8 L1086.9,360.0 L1084.5,363.2 L1081.5,363.2 Z" fill="#60bd4c" stroke="#60bd4c" stroke-width="1.3" stroke-linejoin="round"/>
<text x="1073.0" y="363.6" font-size="10.5" font-weight="normal" fill="#111" text-anchor="end" >AQ</text>
<path d="M1081.5,369.3 L1084.5,369.3 L1086.9,372.5 L1084.5,375.7 L1081.5,375.7 Z" fill="#d4d4d4" stroke="#d4d4d4" stroke-width="1.3" stroke-linejoin="round"/>
<circle cx="1070.0" cy="372.5" r="4.6" fill="#9c9c9c"/>
<path d="M1067.2,372.5 h5.6 M1070.0,369.7 v5.6" stroke="#f0f0f0" stroke-width="1"/>
<rect x="902.5" y="410.5" width="179.0" height="77" fill="#fff" stroke="#6f966a" stroke-width="1"/>
<rect x="902.0" y="391.0" width="180.0" height="19.5" fill="#67c150"/>
<rect x="903.0" y="411.0" width="178.0" height="13" fill="#e9e9ec"/>
<line x1="902.5" y1="411.0" x2="1081.5" y2="411.0" stroke="#d9f5cc" stroke-width="1"/>
<text x="908.0" y="405.1" font-size="11" font-weight="bold" fill="#e4fbd8" text-anchor="start" >Line 2</text>
<circle cx="1071.5" cy="401.0" r="6.4" fill="#f4fff0"/>
<rect x="1070.7" y="398.1" width="1.6" height="1.3" fill="#222"/>
<rect x="1070.7" y="400.2" width="1.6" height="3.4" fill="#222"/>
<text x="992.0" y="420.9" font-size="10.5" font-weight="normal" fill="#333" text-anchor="middle" >Status</text>
<text x="992.0" y="434.1" font-size="11" font-weight="normal" fill="#888" text-anchor="middle" >Anrufmonitor</text>
<text x="992.0" y="446.8" font-size="11" font-weight="normal" fill="#888" text-anchor="middle" textLength="39.5">Technik</text>
<path d="M896.3,426.8 L902.0,426.8 L902.8,430.5 L902.0,434.2 L896.3,434.2 L897.3,430.5 Z" fill="#f1b564"/>
<text x="910.5" y="434.1" font-size="10" font-weight="normal" fill="#111" text-anchor="start" >AI1</text>
<path d="M896.3,439.5 L902.0,439.5 L902.8,443.2 L902.0,446.9 L896.3,446.9 L897.3,443.2 Z" fill="#f1b564"/>
<text x="910.5" y="446.8" font-size="10" font-weight="normal" fill="#111" text-anchor="start" >AI2</text>
<path d="M896.3,452.2 L902.0,452.2 L902.8,455.9 L902.0,459.59999999999997 L896.3,459.59999999999997 L897.3,455.9 Z" fill="#f1b564"/>
<text x="910.5" y="459.5" font-size="10" font-weight="normal" fill="#111" text-anchor="start" >AI3</text>
<path d="M896.3,464.90000000000003 L902.0,464.90000000000003 L902.8,468.6 L902.0,472.3 L896.3,472.3 L897.3,468.6 Z" fill="#f1b564"/>
<text x="910.5" y="472.20000000000005" font-size="10" font-weight="normal" fill="#111" text-anchor="start" >AI4</text>
<path d="M896.3,477.9 L901.5,477.9 L902.5,481.5 L901.5,485.1 L896.3,485.1 L897.9,481.5 Z" fill="#d6d6d6"/>
<circle cx="914.0" cy="481.5" r="4.6" fill="#9c9c9c"/>
<path d="M911.2,481.5 h5.6 M914.0,478.7 v5.6" stroke="#f0f0f0" stroke-width="1"/>
<path d="M1081.5,427.3 L1084.5,427.3 L1086.9,430.5 L1084.5,433.7 L1081.5,433.7 Z" fill="#60bd4c" stroke="#60bd4c" stroke-width="1.3" stroke-linejoin="round"/>
<text x="1073.0" y="434.1" font-size="10.5" font-weight="normal" fill="#111" text-anchor="end" >TQ</text>
<path d="M1081.5,452.8 L1084.5,452.8 L1086.9,456.0 L1084.5,459.2 L1081.5,459.2 Z" fill="#60bd4c" stroke="#60bd4c" stroke-width="1.3" stroke-linejoin="round"/>
<text x="1073.0" y="459.6" font-size="10.5" font-weight="normal" fill="#111" text-anchor="end" >AQ</text>
<path d="M1081.5,465.3 L1084.5,465.3 L1086.9,468.5 L1084.5,471.7 L1081.5,471.7 Z" fill="#d4d4d4" stroke="#d4d4d4" stroke-width="1.3" stroke-linejoin="round"/>
<circle cx="1070.0" cy="468.5" r="4.6" fill="#9c9c9c"/>
<path d="M1067.2,468.5 h5.6 M1070.0,465.7 v5.6" stroke="#f0f0f0" stroke-width="1"/>
<rect x="902.5" y="506.5" width="179.0" height="77" fill="#fff" stroke="#6f966a" stroke-width="1"/>
<rect x="902.0" y="487.0" width="180.0" height="19.5" fill="#67c150"/>
<rect x="903.0" y="507.0" width="178.0" height="13" fill="#e9e9ec"/>
<line x1="902.5" y1="507.0" x2="1081.5" y2="507.0" stroke="#d9f5cc" stroke-width="1"/>
<text x="908.0" y="501.1" font-size="11" font-weight="bold" fill="#e4fbd8" text-anchor="start" >Line 3</text>
<circle cx="1071.5" cy="497.0" r="6.4" fill="#f4fff0"/>
<rect x="1070.7" y="494.1" width="1.6" height="1.3" fill="#222"/>
<rect x="1070.7" y="496.2" width="1.6" height="3.4" fill="#222"/>
<text x="992.0" y="516.9" font-size="10.5" font-weight="normal" fill="#333" text-anchor="middle" >Status</text>
<text x="992.0" y="530.1" font-size="11" font-weight="normal" fill="#888" text-anchor="middle" >Anrufmonitor</text>
<text x="992.0" y="542.8" font-size="11" font-weight="normal" fill="#888" text-anchor="middle" textLength="39.5">Technik</text>
<path d="M896.3,522.8 L902.0,522.8 L902.8,526.5 L902.0,530.2 L896.3,530.2 L897.3,526.5 Z" fill="#f1b564"/>
<text x="910.5" y="530.1" font-size="10" font-weight="normal" fill="#111" text-anchor="start" >AI1</text>
<path d="M896.3,535.5 L902.0,535.5 L902.8,539.2 L902.0,542.9000000000001 L896.3,542.9000000000001 L897.3,539.2 Z" fill="#f1b564"/>
<text x="910.5" y="542.8000000000001" font-size="10" font-weight="normal" fill="#111" text-anchor="start" >AI2</text>
<path d="M896.3,548.1999999999999 L902.0,548.1999999999999 L902.8,551.9 L902.0,555.6 L896.3,555.6 L897.3,551.9 Z" fill="#f1b564"/>
<text x="910.5" y="555.5" font-size="10" font-weight="normal" fill="#111" text-anchor="start" >AI3</text>
<path d="M896.3,560.9 L902.0,560.9 L902.8,564.6 L902.0,568.3000000000001 L896.3,568.3000000000001 L897.3,564.6 Z" fill="#f1b564"/>
<text x="910.5" y="568.2" font-size="10" font-weight="normal" fill="#111" text-anchor="start" >AI4</text>
<path d="M896.3,573.9 L901.5,573.9 L902.5,577.5 L901.5,581.1 L896.3,581.1 L897.9,577.5 Z" fill="#d6d6d6"/>
<circle cx="914.0" cy="577.5" r="4.6" fill="#9c9c9c"/>
<path d="M911.2,577.5 h5.6 M914.0,574.7 v5.6" stroke="#f0f0f0" stroke-width="1"/>
<path d="M1081.5,523.3 L1084.5,523.3 L1086.9,526.5 L1084.5,529.7 L1081.5,529.7 Z" fill="#60bd4c" stroke="#60bd4c" stroke-width="1.3" stroke-linejoin="round"/>
<text x="1073.0" y="530.1" font-size="10.5" font-weight="normal" fill="#111" text-anchor="end" >TQ</text>
<path d="M1081.5,548.8 L1084.5,548.8 L1086.9,552.0 L1084.5,555.2 L1081.5,555.2 Z" fill="#60bd4c" stroke="#60bd4c" stroke-width="1.3" stroke-linejoin="round"/>
<text x="1073.0" y="555.6" font-size="10.5" font-weight="normal" fill="#111" text-anchor="end" >AQ</text>
<path d="M1081.5,561.3 L1084.5,561.3 L1086.9,564.5 L1084.5,567.7 L1081.5,567.7 Z" fill="#d4d4d4" stroke="#d4d4d4" stroke-width="1.3" stroke-linejoin="round"/>
<circle cx="1070.0" cy="564.5" r="4.6" fill="#9c9c9c"/>
<path d="M1067.2,564.5 h5.6 M1070.0,561.7 v5.6" stroke="#f0f0f0" stroke-width="1"/>
<rect x="902.5" y="602.5" width="179.0" height="77" fill="#fff" stroke="#6f966a" stroke-width="1"/>
<rect x="902.0" y="583.0" width="180.0" height="19.5" fill="#67c150"/>
<rect x="903.0" y="603.0" width="178.0" height="13" fill="#e9e9ec"/>
<line x1="902.5" y1="603.0" x2="1081.5" y2="603.0" stroke="#d9f5cc" stroke-width="1"/>
<text x="908.0" y="597.1" font-size="11" font-weight="bold" fill="#e4fbd8" text-anchor="start" >Line 4</text>
<circle cx="1071.5" cy="593.0" r="6.4" fill="#f4fff0"/>
<rect x="1070.7" y="590.1" width="1.6" height="1.3" fill="#222"/>
<rect x="1070.7" y="592.2" width="1.6" height="3.4" fill="#222"/>
<text x="992.0" y="612.9" font-size="10.5" font-weight="normal" fill="#333" text-anchor="middle" >Status</text>
<text x="992.0" y="626.1" font-size="11" font-weight="normal" fill="#888" text-anchor="middle" >Anrufmonitor</text>
<text x="992.0" y="638.8" font-size="11" font-weight="normal" fill="#888" text-anchor="middle" textLength="39.5">Technik</text>
<path d="M896.3,618.8 L902.0,618.8 L902.8,622.5 L902.0,626.2 L896.3,626.2 L897.3,622.5 Z" fill="#f1b564"/>
<text x="910.5" y="626.1" font-size="10" font-weight="normal" fill="#111" text-anchor="start" >AI1</text>
<path d="M896.3,631.5 L902.0,631.5 L902.8,635.2 L902.0,638.9000000000001 L896.3,638.9000000000001 L897.3,635.2 Z" fill="#f1b564"/>
<text x="910.5" y="638.8000000000001" font-size="10" font-weight="normal" fill="#111" text-anchor="start" >AI2</text>
<path d="M896.3,644.1999999999999 L902.0,644.1999999999999 L902.8,647.9 L902.0,651.6 L896.3,651.6 L897.3,647.9 Z" fill="#f1b564"/>
<text x="910.5" y="651.5" font-size="10" font-weight="normal" fill="#111" text-anchor="start" >AI3</text>
<path d="M896.3,656.9 L902.0,656.9 L902.8,660.6 L902.0,664.3000000000001 L896.3,664.3000000000001 L897.3,660.6 Z" fill="#f1b564"/>
<text x="910.5" y="664.2" font-size="10" font-weight="normal" fill="#111" text-anchor="start" >AI4</text>
<path d="M896.3,669.9 L901.5,669.9 L902.5,673.5 L901.5,677.1 L896.3,677.1 L897.9,673.5 Z" fill="#d6d6d6"/>
<circle cx="914.0" cy="673.5" r="4.6" fill="#9c9c9c"/>
<path d="M911.2,673.5 h5.6 M914.0,670.7 v5.6" stroke="#f0f0f0" stroke-width="1"/>
<path d="M1081.5,619.3 L1084.5,619.3 L1086.9,622.5 L1084.5,625.7 L1081.5,625.7 Z" fill="#60bd4c" stroke="#60bd4c" stroke-width="1.3" stroke-linejoin="round"/>
<text x="1073.0" y="626.1" font-size="10.5" font-weight="normal" fill="#111" text-anchor="end" >TQ</text>
<path d="M1081.5,644.8 L1084.5,644.8 L1086.9,648.0 L1084.5,651.2 L1081.5,651.2 Z" fill="#60bd4c" stroke="#60bd4c" stroke-width="1.3" stroke-linejoin="round"/>
<text x="1073.0" y="651.6" font-size="10.5" font-weight="normal" fill="#111" text-anchor="end" >AQ</text>
<path d="M1081.5,657.3 L1084.5,657.3 L1086.9,660.5 L1084.5,663.7 L1081.5,663.7 Z" fill="#d4d4d4" stroke="#d4d4d4" stroke-width="1.3" stroke-linejoin="round"/>
<circle cx="1070.0" cy="660.5" r="4.6" fill="#9c9c9c"/>
<path d="M1067.2,660.5 h5.6 M1070.0,657.7 v5.6" stroke="#f0f0f0" stroke-width="1"/>
<path d="M1145.5,327.5 H1280.0 A6.5,6.5 0 0 1 1280.0,340.5 H1145.5 Z" fill="#fff" stroke="#333" stroke-width="1"/>
<rect x="1177.5" y="328.5" width="96.0" height="11.0" fill="#e6e6e6"/>
<line x1="1177.5" y1="327.5" x2="1177.5" y2="340.5" stroke="#333" stroke-width="1"/>
<rect x="1278.6" y="330.8" width="1.8" height="1.5" fill="#1e1e1e"/>
<rect x="1278.6" y="333.0" width="1.8" height="4" fill="#1e1e1e"/>
<text x="1161.5" y="338.3" font-size="10.2" font-weight="bold" fill="#333" text-anchor="middle" >VQ</text>
<text x="1186.0" y="338.6" font-size="11" font-weight="bold" fill="#363a40" text-anchor="start" >L1</text>
<path d="M1139.3,330.3 L1145.0,330.3 L1145.8,334.0 L1145.0,337.7 L1139.3,337.7 L1140.3,334.0 Z" fill="#f1b564"/>
<path d="M1145.5,340.5 H1280.0 A6.5,6.5 0 0 1 1280.0,353.5 H1145.5 Z" fill="#fff" stroke="#333" stroke-width="1"/>
<rect x="1177.5" y="341.5" width="96.0" height="11.0" fill="#e6e6e6"/>
<line x1="1177.5" y1="340.5" x2="1177.5" y2="353.5" stroke="#333" stroke-width="1"/>
<rect x="1278.6" y="343.8" width="1.8" height="1.5" fill="#1e1e1e"/>
<rect x="1278.6" y="346.0" width="1.8" height="4" fill="#1e1e1e"/>
<text x="1161.5" y="351.3" font-size="10.2" font-weight="bold" fill="#333" text-anchor="middle" >L</text>
<text x="1186.0" y="351.6" font-size="11" font-weight="bold" fill="#363a40" text-anchor="start" >CM Tracker</text>
<path d="M1139.3,343.3 L1145.0,343.3 L1145.8,347.0 L1145.0,350.7 L1139.3,350.7 L1140.3,347.0 Z" fill="#f1b564"/>
<path d="M1151.5,353.5 H1286.0 A6.5,6.5 0 0 1 1286.0,366.5 H1151.5 Z" fill="#fff" stroke="#333" stroke-width="1"/>
<rect x="1183.5" y="354.5" width="96.0" height="11.0" fill="#e6e6e6"/>
<line x1="1183.5" y1="353.5" x2="1183.5" y2="366.5" stroke="#333" stroke-width="1"/>
<rect x="1284.6" y="356.8" width="1.8" height="1.5" fill="#1e1e1e"/>
<rect x="1284.6" y="359.0" width="1.8" height="4" fill="#1e1e1e"/>
<text x="1167.5" y="364.3" font-size="10.2" font-weight="bold" fill="#333" text-anchor="middle" >M</text>
<text x="1192.0" y="364.6" font-size="11" font-weight="bold" fill="#363a40" text-anchor="start" >IncommingCall</text>
<path d="M1145.3,356.3 L1151.0,356.3 L1151.8,360.0 L1151.0,363.7 L1145.3,363.7 L1146.3,360.0 Z" fill="#f1b564"/>
<path d="M1145.5,423.5 H1280.0 A6.5,6.5 0 0 1 1280.0,436.5 H1145.5 Z" fill="#fff" stroke="#333" stroke-width="1"/>
<rect x="1177.5" y="424.5" width="96.0" height="11.0" fill="#e6e6e6"/>
<line x1="1177.5" y1="423.5" x2="1177.5" y2="436.5" stroke="#333" stroke-width="1"/>
<rect x="1278.6" y="426.8" width="1.8" height="1.5" fill="#1e1e1e"/>
<rect x="1278.6" y="429.0" width="1.8" height="4" fill="#1e1e1e"/>
<text x="1161.5" y="434.3" font-size="10.2" font-weight="bold" fill="#333" text-anchor="middle" >VQ</text>
<text x="1186.0" y="434.6" font-size="11" font-weight="bold" fill="#363a40" text-anchor="start" >L2</text>
<path d="M1139.3,426.3 L1145.0,426.3 L1145.8,430.0 L1145.0,433.7 L1139.3,433.7 L1140.3,430.0 Z" fill="#f1b564"/>
<path d="M1145.5,519.5 H1280.0 A6.5,6.5 0 0 1 1280.0,532.5 H1145.5 Z" fill="#fff" stroke="#333" stroke-width="1"/>
<rect x="1177.5" y="520.5" width="96.0" height="11.0" fill="#e6e6e6"/>
<line x1="1177.5" y1="519.5" x2="1177.5" y2="532.5" stroke="#333" stroke-width="1"/>
<rect x="1278.6" y="522.8" width="1.8" height="1.5" fill="#1e1e1e"/>
<rect x="1278.6" y="525.0" width="1.8" height="4" fill="#1e1e1e"/>
<text x="1161.5" y="530.3000000000001" font-size="10.2" font-weight="bold" fill="#333" text-anchor="middle" >VQ</text>
<text x="1186.0" y="530.6" font-size="11" font-weight="bold" fill="#363a40" text-anchor="start" >L3</text>
<path d="M1139.3,522.3 L1145.0,522.3 L1145.8,526.0 L1145.0,529.7 L1139.3,529.7 L1140.3,526.0 Z" fill="#f1b564"/>
<path d="M1145.5,615.5 H1280.0 A6.5,6.5 0 0 1 1280.0,628.5 H1145.5 Z" fill="#fff" stroke="#333" stroke-width="1"/>
<rect x="1177.5" y="616.5" width="96.0" height="11.0" fill="#e6e6e6"/>
<line x1="1177.5" y1="615.5" x2="1177.5" y2="628.5" stroke="#333" stroke-width="1"/>
<rect x="1278.6" y="618.8" width="1.8" height="1.5" fill="#1e1e1e"/>
<rect x="1278.6" y="621.0" width="1.8" height="4" fill="#1e1e1e"/>
<text x="1161.5" y="626.3000000000001" font-size="10.2" font-weight="bold" fill="#333" text-anchor="middle" >VQ</text>
<text x="1186.0" y="626.6" font-size="11" font-weight="bold" fill="#363a40" text-anchor="start" >L4</text>
<path d="M1139.3,618.3 L1145.0,618.3 L1145.8,622.0 L1145.0,625.7 L1139.3,625.7 L1140.3,622.0 Z" fill="#f1b564"/>
<path d="M90.0,769.5 H224.5 V782.5 H90.0 A6.5,6.5 0 0 1 90.0,769.5 Z" fill="#fff" stroke="#333" stroke-width="1"/>
<rect x="96.5" y="770.5" width="96.0" height="11.0" fill="#e6e6e6"/>
<line x1="192.5" y1="769.5" x2="192.5" y2="782.5" stroke="#333" stroke-width="1"/>
<rect x="89.6" y="772.8" width="1.8" height="1.5" fill="#1e1e1e"/>
<rect x="89.6" y="775.0" width="1.8" height="4" fill="#1e1e1e"/>
<text x="103.8" y="778.9" font-size="8" font-weight="normal" fill="#454545" text-anchor="start" textLength="74.3" lengthAdjust="spacingAndGlyphs">CallMonitor Recipient</text>
<text x="208.5" y="779.8000000000001" font-size="10.2" font-weight="bold" fill="#333" text-anchor="middle" >VI</text>
<path d="M224.5,772.8 L227.5,772.8 L229.9,776.0 L227.5,779.2 L224.5,779.2 Z" fill="#60bd4c" stroke="#60bd4c" stroke-width="1.3" stroke-linejoin="round"/>
<path d="M90.0,788.5 H224.5 V801.5 H90.0 A6.5,6.5 0 0 1 90.0,788.5 Z" fill="#fff" stroke="#333" stroke-width="1"/>
<rect x="96.5" y="789.5" width="96.0" height="11.0" fill="#e6e6e6"/>
<line x1="192.5" y1="788.5" x2="192.5" y2="801.5" stroke="#333" stroke-width="1"/>
<rect x="89.6" y="791.8" width="1.8" height="1.5" fill="#1e1e1e"/>
<rect x="89.6" y="794.0" width="1.8" height="4" fill="#1e1e1e"/>
<text x="103.8" y="797.9" font-size="8" font-weight="normal" fill="#454545" text-anchor="start" textLength="62.5" lengthAdjust="spacingAndGlyphs">CallMonitor Caller</text>
<text x="208.5" y="798.8000000000001" font-size="10.2" font-weight="bold" fill="#333" text-anchor="middle" >VI</text>
<path d="M224.5,791.8 L227.5,791.8 L229.9,795.0 L227.5,798.2 L224.5,798.2 Z" fill="#60bd4c" stroke="#60bd4c" stroke-width="1.3" stroke-linejoin="round"/>
<path d="M90.0,807.5 H224.5 V820.5 H90.0 A6.5,6.5 0 0 1 90.0,807.5 Z" fill="#fff" stroke="#333" stroke-width="1"/>
<rect x="96.5" y="808.5" width="96.0" height="11.0" fill="#e6e6e6"/>
<line x1="192.5" y1="807.5" x2="192.5" y2="820.5" stroke="#333" stroke-width="1"/>
<rect x="89.6" y="810.8" width="1.8" height="1.5" fill="#1e1e1e"/>
<rect x="89.6" y="813.0" width="1.8" height="4" fill="#1e1e1e"/>
<text x="103.8" y="816.9" font-size="8" font-weight="normal" fill="#454545" text-anchor="start" textLength="74.9" lengthAdjust="spacingAndGlyphs">CallMonitor Extension</text>
<text x="208.5" y="817.8000000000001" font-size="10.2" font-weight="bold" fill="#333" text-anchor="middle" >VI</text>
<path d="M224.5,810.8 L227.5,810.8 L229.9,814.0 L227.5,817.2 L224.5,817.2 Z" fill="#60bd4c" stroke="#60bd4c" stroke-width="1.3" stroke-linejoin="round"/>
<path d="M298,59.5 L627.5,59.5 L627.5,84.5 L645,84.5" fill="none" stroke="#43161a" stroke-width="1.2"/>
<path d="M298,97.5 L517,97.5" fill="none" stroke="#262626" stroke-width="1.2"/>
<path d="M612,97.5 L645,97.5" fill="none" stroke="#262626" stroke-width="1.2"/>
<path d="M740,84.5 L767,84.5" fill="none" stroke="#43161a" stroke-width="1.2"/>
<path d="M861,84.5 L1001,84.5" fill="none" stroke="#262626" stroke-width="1.2"/>
<path d="M861,97.5 L1001,97.5" fill="none" stroke="#262626" stroke-width="1.2"/>
<path d="M861,110.5 L1001,110.5" fill="none" stroke="#262626" stroke-width="1.2"/>
<path d="M861,123.5 L1001,123.5" fill="none" stroke="#262626" stroke-width="1.2"/>
<path d="M183,276.5 L531.5,276.5 L531.5,647.5" fill="none" stroke="#43161a" stroke-width="1.2"/>
<path d="M183,315.5 L307.5,315.5 L307.5,647.5" fill="none" stroke="#43161a" stroke-width="1.2"/>
<path d="M307.5,359.5 L421,359.5" fill="none" stroke="#43161a" stroke-width="1.2"/>
<path d="M307.5,455.5 L421,455.5" fill="none" stroke="#43161a" stroke-width="1.2"/>
<path d="M307.5,551.5 L421,551.5" fill="none" stroke="#43161a" stroke-width="1.2"/>
<path d="M307.5,647.5 L421,647.5" fill="none" stroke="#43161a" stroke-width="1.2"/>
<path d="M183,372.5 L562,372.5" fill="none" stroke="#262626" stroke-width="1.2"/>
<path d="M183,430.5 L397.5,430.5 L397.5,468.5 L562,468.5" fill="none" stroke="#262626" stroke-width="1.2"/>
<path d="M307.5,468.5 L421,468.5" fill="none" stroke="#262626" stroke-width="1.2"/>
<path d="M183,526.5 L397.5,526.5 L397.5,564.5 L562,564.5" fill="none" stroke="#262626" stroke-width="1.2"/>
<path d="M307.5,564.5 L421,564.5" fill="none" stroke="#262626" stroke-width="1.2"/>
<path d="M183,622.5 L403.5,622.5 L403.5,660.5 L568,660.5" fill="none" stroke="#262626" stroke-width="1.2"/>
<path d="M307.5,622.5 L307.5,660.5 L421,660.5" fill="none" stroke="#262626" stroke-width="1.2"/>
<path d="M516,359.5 L901,359.5" fill="none" stroke="#43161a" stroke-width="1.2"/>
<path d="M656,359.5 L736.5,359.5 L736.5,372.5 L901,372.5" fill="none" stroke="#43161a" stroke-width="1.2"/>
<path d="M842,334.5 L901,334.5" fill="none" stroke="#262626" stroke-width="1.2"/>
<path d="M842,347.5 L901,347.5" fill="none" stroke="#262626" stroke-width="1.2"/>
<path d="M516,455.5 L901,455.5" fill="none" stroke="#43161a" stroke-width="1.2"/>
<path d="M656,455.5 L736.5,455.5 L736.5,468.5 L901,468.5" fill="none" stroke="#43161a" stroke-width="1.2"/>
<path d="M842,430.5 L901,430.5" fill="none" stroke="#262626" stroke-width="1.2"/>
<path d="M842,443.5 L901,443.5" fill="none" stroke="#262626" stroke-width="1.2"/>
<path d="M516,551.5 L901,551.5" fill="none" stroke="#43161a" stroke-width="1.2"/>
<path d="M656,551.5 L736.5,551.5 L736.5,564.5 L901,564.5" fill="none" stroke="#43161a" stroke-width="1.2"/>
<path d="M842,526.5 L901,526.5" fill="none" stroke="#262626" stroke-width="1.2"/>
<path d="M842,539.5 L901,539.5" fill="none" stroke="#262626" stroke-width="1.2"/>
<path d="M516,647.5 L901,647.5" fill="none" stroke="#43161a" stroke-width="1.2"/>
<path d="M663,647.5 L736.5,647.5 L736.5,660.5 L901,660.5" fill="none" stroke="#43161a" stroke-width="1.2"/>
<path d="M842,622.5 L901,622.5" fill="none" stroke="#262626" stroke-width="1.2"/>
<path d="M842,635.5 L901,635.5" fill="none" stroke="#262626" stroke-width="1.2"/>
<path d="M1085,334.5 L1119.5,334.5" fill="none" stroke="#262626" stroke-width="1.2"/>
<path d="M1119.5,334.5 L1144,334.5" fill="none" stroke="#43161a" stroke-width="1.2"/>
<path d="M1085,359.5 L1150,359.5" fill="none" stroke="#43161a" stroke-width="1.2"/>
<path d="M1085,430.5 L1119.5,430.5" fill="none" stroke="#262626" stroke-width="1.2"/>
<path d="M1119.5,430.5 L1144,430.5" fill="none" stroke="#43161a" stroke-width="1.2"/>
<path d="M1085,455.5 L1119.5,455.5" fill="none" stroke="#43161a" stroke-width="1.2"/>
<path d="M1085,526.5 L1119.5,526.5" fill="none" stroke="#262626" stroke-width="1.2"/>
<path d="M1119.5,526.5 L1144,526.5" fill="none" stroke="#43161a" stroke-width="1.2"/>
<path d="M1085,551.5 L1119.5,551.5" fill="none" stroke="#43161a" stroke-width="1.2"/>
<path d="M1085,622.5 L1119.5,622.5" fill="none" stroke="#262626" stroke-width="1.2"/>
<path d="M1119.5,622.5 L1144,622.5" fill="none" stroke="#43161a" stroke-width="1.2"/>
<path d="M1085,647.5 L1119.5,647.5" fill="none" stroke="#43161a" stroke-width="1.2"/>
<path d="M1119.5,334.5 L1119.5,647.5" fill="none" stroke="#262626" stroke-width="1.2"/>
<path d="M1119.5,347.5 L1144,347.5" fill="none" stroke="#262626" stroke-width="1.2"/>
</svg>
</body></html>
